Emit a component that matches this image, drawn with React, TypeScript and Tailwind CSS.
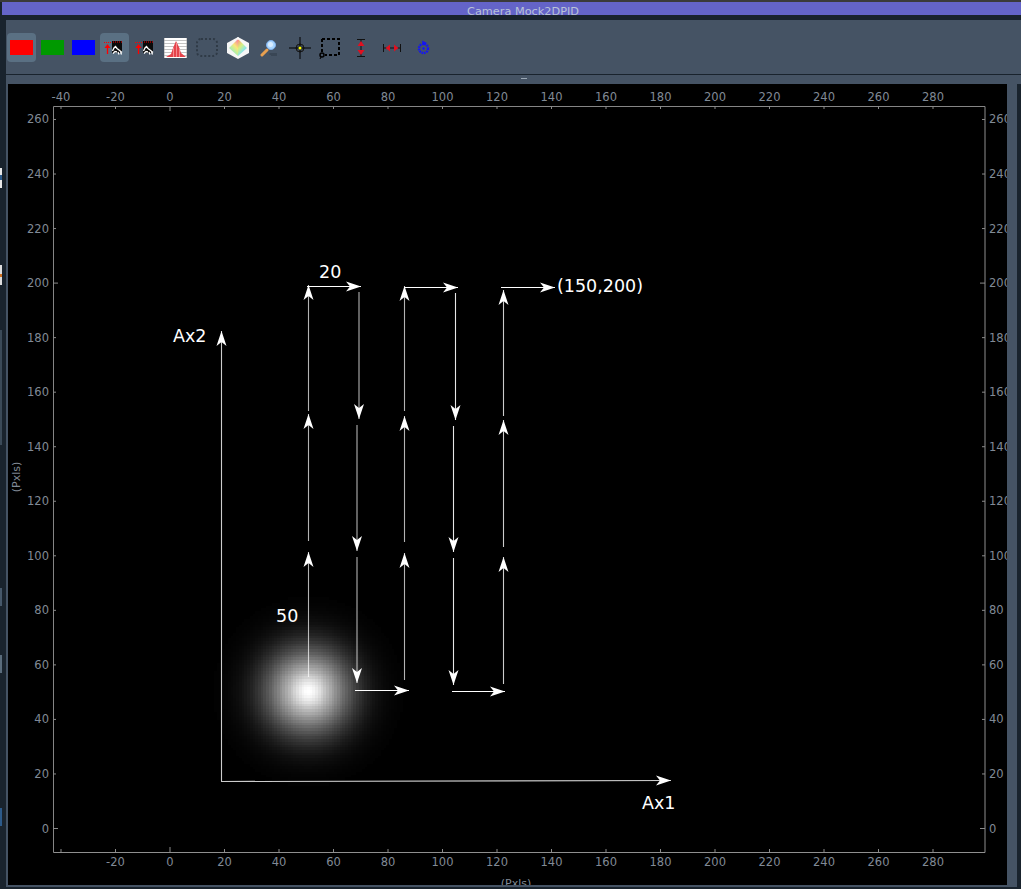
const xTicks = [-40, -20, 0, 20, 40, 60, 80, 100, 120, 140, 160, 180, 200, 220, 240, 260, 280]
const yTicks = [0, 20, 40, 60, 80, 100, 120, 140, 160, 180, 200, 220, 240, 260]
const tx = (v: number) => 170 + v * 2.725
const ty = (v: number) => 828.5 - v * 2.727

type arrow = { x1: number, y1: number, x2: number, y2: number, o?: number }

const arrows: arrow[] = [
    { x1: 221, y1: 781.5, x2: 671, y2: 780.5, o: 0.8 },
    { x1: 221.5, y1: 781, x2: 221.5, y2: 331, o: 0.8 },
    { x1: 307, y1: 286.5, x2: 361, y2: 286.5 },
    { x1: 404, y1: 287.5, x2: 458, y2: 287.5 },
    { x1: 501, y1: 287.5, x2: 555, y2: 287.5 },
    { x1: 355, y1: 690.5, x2: 409, y2: 690.5 },
    { x1: 452, y1: 691.5, x2: 505, y2: 691.5 },
    { x1: 308.5, y1: 677, x2: 308.5, y2: 552, o: 0.7 },
    { x1: 308.5, y1: 541, x2: 308.5, y2: 414, o: 0.7 },
    { x1: 308.5, y1: 411, x2: 308.5, y2: 285, o: 0.7 },
    { x1: 359, y1: 292, x2: 359, y2: 419, o: 0.7 },
    { x1: 357, y1: 425, x2: 357, y2: 551, o: 0.7 },
    { x1: 357, y1: 557, x2: 357, y2: 683, o: 0.7 },
    { x1: 404.5, y1: 680, x2: 404.5, y2: 553, o: 0.7 },
    { x1: 404.5, y1: 542, x2: 404.5, y2: 416, o: 0.7 },
    { x1: 404.5, y1: 411, x2: 404.5, y2: 286, o: 0.7 },
    { x1: 455.5, y1: 293, x2: 455.5, y2: 420, o: 0.9 },
    { x1: 453.5, y1: 426, x2: 453.5, y2: 552, o: 0.9 },
    { x1: 453.5, y1: 558, x2: 453.5, y2: 685, o: 0.9 },
    { x1: 503.5, y1: 684, x2: 503.5, y2: 557, o: 0.8 },
    { x1: 503.5, y1: 547, x2: 503.5, y2: 420, o: 0.8 },
    { x1: 503.5, y1: 416, x2: 503.5, y2: 290, o: 0.8 },
]

const Arrow = ({ x1, y1, x2, y2, o = 1 }: arrow) => {
    const a = Math.atan2(y2 - y1, x2 - x1) * 180 / Math.PI
    return (
        <g>
            <line x1={x1} y1={y1} x2={x2} y2={y2} stroke="#fff" strokeOpacity={o} strokeWidth="1.1" />
            <path d="M0 0 L-15 -5 L-11 0 L-15 5 Z" fill="#fff" transform={`translate(${x2} ${y2}) rotate(${a})`} />
        </g>
    )
}

// the spot is a small camera image, so it is drawn in image pixels
const blob: { x: number, y: number, g: number }[] = []
for (let i = -36; i <= 36; i++) {
    for (let j = -36; j <= 36; j++) {
        const r2 = (i * i + j * j) * 2.725 * 2.725
        const g = Math.round(255 * (0.85 * Math.exp(-r2 / (2 * 30 * 30)) + 0.15 * Math.exp(-r2 / (2 * 10 * 10))))
        if (g > 1) blob.push({ x: Math.round(308 + i * 2.725), y: Math.round(691 + j * 2.725), g })
    }
}

const Plot = () => (
    <svg className="block" width="999" height="801" viewBox="8 84 999 801" fontFamily="'DejaVu Sans', sans-serif">
        <rect x="8" y="84" width="999" height="801" fill="#000" />
        <g shapeRendering="crispEdges">
            {blob.map(p => <rect key={`${p.x}-${p.y}`} x={p.x - 1} y={p.y - 1} width="3" height="3" fill={`rgb(${p.g},${p.g},${p.g})`} />)}
        </g>

        <path d="M53.5 852.5 V106.5 H985" fill="none" stroke="#858585" />
        <path d="M985 106.5 V852.5 H53.5" fill="none" stroke="#8f8f8f" />
        {xTicks.map(v => (
            <g key={v} stroke="#8a8a8a">
                <line x1={tx(v)} x2={tx(v)} y1="106" y2={v === 0 ? 111 : 109} />
                <line x1={tx(v)} x2={tx(v)} y1="852" y2={v === 0 ? 847 : 849} />
            </g>
        ))}
        {yTicks.map(v => (
            <g key={v} stroke="#8a8a8a">
                <line y1={ty(v)} y2={ty(v)} x1="53" x2={v === 0 || v === 200 ? 58 : 56} />
                <line y1={ty(v)} y2={ty(v)} x1="985" x2={v === 0 || v === 200 ? 980 : 982} />
            </g>
        ))}
        <g fontSize="11.5" fill="#808a96">
            {xTicks.map(v => <text key={v} x={tx(v)} y="101" textAnchor="middle">{v}</text>)}
            {xTicks.slice(1).map(v => <text key={v} x={tx(v)} y="866" textAnchor="middle">{v}</text>)}
            {yTicks.map(v => <text key={v} x="49" y={ty(v) + 4} textAnchor="end">{v}</text>)}
            {yTicks.map(v => <text key={v} x="989" y={ty(v) + 4}>{v}</text>)}
            <text x="516" y="887" textAnchor="middle" fontSize="11">(Pxls)</text>
            <text transform="translate(20 477) rotate(-90)" textAnchor="middle" fontSize="11">(Pxls)</text>
        </g>

        {arrows.map(a => <Arrow key={`${a.x1}-${a.y1}-${a.x2}`} {...a} />)}
        <g fontSize="17.5" fill="#fff">
            <text x="319" y="278">20</text>
            <text x="557" y="292">(150,200)</text>
            <text x="173" y="342">Ax2</text>
            <text x="276" y="622">50</text>
            <text x="642" y="809">Ax1</text>
        </g>
    </svg>
)

const Swatch = ({ color }: { color: string }) => <span className={`block w-[23px] h-[15px] ${color}`} />

const CropIcon = () => (
    <svg width="20" height="18" viewBox="0 0 20 18">
        <rect x="8" y="2" width="10" height="12" fill="#0a0a0a" />
        <path d="M8.5 12 L10 9 L11.5 7.5 L13 9.5 L15 11 L18 13.5 M9 14.5 L11 12.5 L13 13 M14 13 L15 15.5 M16.5 13 L17.5 15.5" stroke="#fff" strokeWidth="1.3" fill="none" />
        <path d="M9 3 H18" stroke="#f00" strokeDasharray="1 1" />
        <path d="M3.5 15 V8" stroke="#f00" strokeWidth="1.3" />
        <path d="M0.5 9 L3.5 5 L6.5 9 Z" fill="#f00" />
        <path d="M0 3.5 H7" stroke="#f00" strokeDasharray="1 1" />
    </svg>
)

const Histogram = () => (
    <svg width="23" height="20" viewBox="0 0 23 20">
        <rect width="23" height="20" fill="#fff" />
        <path d="M0 2.5 H23 M0 5.5 H23 M0 8.5 H23 M0 11.5 H23 M0 14.5 H23 M0 17.5 H23" stroke="#c4c4c4" />
        <path d="M2 19 L7 16 L9 10 L12 3 L15 9 L17 15 L22 19 Z" fill="#e5434b" />
        <path d="M9.5 10 V19 M12.5 5 V19 M15.5 10 V19" stroke="#f58a8f" />
        <path d="M0 0 V20 M23 0 V20" stroke="#a0a0a0" />
    </svg>
)

const Cube = () => (
    <svg width="24" height="24" viewBox="0 0 24 24">
        <defs>
            <linearGradient id="cubeLeft" x1="0.8" y1="0" x2="0.2" y2="1">
                <stop offset="0" stopColor="#f88a9a" />
                <stop offset="0.35" stopColor="#f8e878" />
                <stop offset="0.65" stopColor="#b0f0a8" />
                <stop offset="1" stopColor="#c8a0f8" />
            </linearGradient>
            <linearGradient id="cubeRight" x1="0.2" y1="0" x2="0.8" y2="1">
                <stop offset="0" stopColor="#f8a078" />
                <stop offset="0.35" stopColor="#d8f080" />
                <stop offset="0.65" stopColor="#90e8e0" />
                <stop offset="1" stopColor="#a0b0f8" />
            </linearGradient>
        </defs>
        <path d="M12 1 L23 7 V17 L12 23 L1 17 V7 Z" fill="#f6f6f6" />
        <path d="M12 3 L3 12 L12 20 Z" fill="url(#cubeLeft)" />
        <path d="M12 3 L21 12 L12 20 Z" fill="url(#cubeRight)" />
        <path d="M12 1 V4" stroke="#fff" />
    </svg>
)

const Loupe = () => (
    <svg width="18" height="18" viewBox="0 0 18 18">
        <path d="M2 16 L7 11" stroke="#e8a050" strokeWidth="3" strokeLinecap="round" />
        <circle cx="11" cy="6" r="4.5" fill="#a8d4fc" stroke="#7fb0ec" />
        <circle cx="10.5" cy="5.5" r="2.5" fill="#d8ecff" />
        <path d="M9.5 15 h1.5 M12 14 v3 M14 14 v3 M16 14 v3" stroke="#2f3a46" />
    </svg>
)

const Crosshair = () => (
    <svg width="24" height="24" viewBox="0 0 24 24" fill="none">
        <circle cx="12" cy="12" r="4" fill="#36424f" stroke="#1a1a1a" />
        <path d="M12 1 V23 M1 12 H23" stroke="#000" />
        <circle cx="12" cy="12" r="1.5" fill="#ff0" />
    </svg>
)

const Roi = () => (
    <svg width="22" height="22" viewBox="0 0 22 22" fill="none">
        <path d="M3 2 H20 V18 H6 M3 2 V15" stroke="#000" strokeWidth="2" strokeDasharray="3 2" />
        <circle cx="3" cy="18" r="2" stroke="#000" strokeWidth="1.5" />
        <path d="M2 20 L1 22" stroke="#000" />
    </svg>
)

const RangeV = () => (
    <svg width="10" height="18" viewBox="0 0 10 18" fill="none">
        <path d="M1 0.5 H9 M1 17.5 H9 M5 1 V17" stroke="#111" />
        <path d="M5 2 L8.5 7 H1.5 Z M5 16 L8.5 11 H1.5 Z" fill="#e01020" />
    </svg>
)

const RangeH = () => (
    <svg width="18" height="10" viewBox="0 0 18 10" fill="none">
        <path d="M0.5 1 V9 M17.5 1 V9 M1 5 H17" stroke="#111" />
        <path d="M2.5 5 L7 1.5 V8.5 Z M15.5 5 L11 1.5 V8.5 Z" fill="#e01020" />
    </svg>
)

const BlueTarget = () => (
    <svg width="13" height="15" viewBox="0 0 13 15" fill="none">
        <circle cx="6.5" cy="8.5" r="4.5" stroke="#1414f5" strokeWidth="2.4" strokeDasharray="1.6 0.8" />
        <path d="M5 0.5 L10 3 L6 5.5 Z" fill="#1414f5" />
        <circle cx="6.5" cy="8.5" r="1.2" fill="#1414f5" />
    </svg>
)

const tools = [
    { id: 'red', active: true, icon: <Swatch color="bg-[#ff0000]" /> },
    { id: 'green', active: false, icon: <Swatch color="bg-[#009900]" /> },
    { id: 'blue', active: false, icon: <Swatch color="bg-[#0000ff]" /> },
    { id: 'crop', active: true, icon: <CropIcon /> },
    { id: 'crop2', active: false, icon: <CropIcon /> },
    { id: 'hist', active: false, icon: <Histogram /> },
    { id: 'roi-none', active: false, icon: <span className="block w-[22px] h-[19px] rounded-[5px] border-2 border-dotted border-[#2f3a46]" /> },
    { id: 'cube', active: false, icon: <Cube /> },
    { id: 'loupe', active: false, icon: <Loupe /> },
    { id: 'cross', active: false, icon: <Crosshair /> },
    { id: 'roi', active: false, icon: <Roi /> },
    { id: 'rangev', active: false, icon: <RangeV /> },
    { id: 'rangeh', active: false, icon: <RangeH /> },
    { id: 'target', active: false, icon: <BlueTarget /> },
]

export default function App() {
    return (
        <div className="relative w-[1021px] h-[889px] overflow-hidden bg-[#19232d] font-['DejaVu_Sans',sans-serif]">
            <div className="h-[2px] bg-[#3a3a3a]" />
            <div className="h-[13px] ml-[2px] bg-[#6464c8] overflow-hidden pl-[465px] text-[11.3px] leading-[19px] text-[#b9c2d8]">Camera Mock2DPID</div>
            <div className="h-[1px] bg-[#19232d]" />
            <div className="flex pt-[4px]">
                <div className="w-[6px] shrink-0 relative">
                    <span className="absolute left-0 top-[148px] w-[2px] h-[20px] bg-[#e8e8e8]" />
                    <span className="absolute left-0 top-[155px] w-[2px] h-[5px] bg-[#2c5a8a]" />
                    <span className="absolute left-0 top-[245px] w-[2px] h-[20px] bg-[#dddddd]" />
                    <span className="absolute left-0 top-[254px] w-[2px] h-[3px] bg-[#d07020]" />
                    <span className="absolute left-0 top-[310px] w-[2px] h-[115px] bg-[#3b4a58]" />
                    <span className="absolute left-0 top-[568px] w-[2px] h-[18px] bg-[#46586a]" />
                    <span className="absolute left-0 top-[635px] w-[2px] h-[18px] bg-[#5a6c7c]" />
                    <span className="absolute left-0 top-[788px] w-[2px] h-[18px] bg-[#2c5a8a]" />
                </div>
                <div className="flex-1 min-w-0">
                    <div className="h-[54px] bg-[#455364] flex items-center pl-[1px] pt-[1px]">
                        {tools.map(t => (
                            <div key={t.id} className={`w-[29px] h-[29px] mr-[1.9px] shrink-0 flex items-center justify-center rounded-[4px] ${t.active ? 'bg-[#5a7083]' : ''}`}>
                                {t.icon}
                            </div>
                        ))}
                    </div>
                    <div className="h-[1px] bg-[#19232d]" />
                    <div className="h-[9px] bg-[#455364] flex justify-center pt-[3px] pl-[20px]">
                        <span className="block w-[6px] h-[1px] bg-[#9aa7b4]" />
                    </div>
                    <div className="flex">
                        <div className="w-[2px] bg-[#455364]" />
                        <Plot />
                        <div className="w-[10px] bg-[#455364]" />
                    </div>
                    <div className="h-[2px] w-[1011px] bg-[#455364]" />
                </div>
            </div>
        </div>
    )
}
